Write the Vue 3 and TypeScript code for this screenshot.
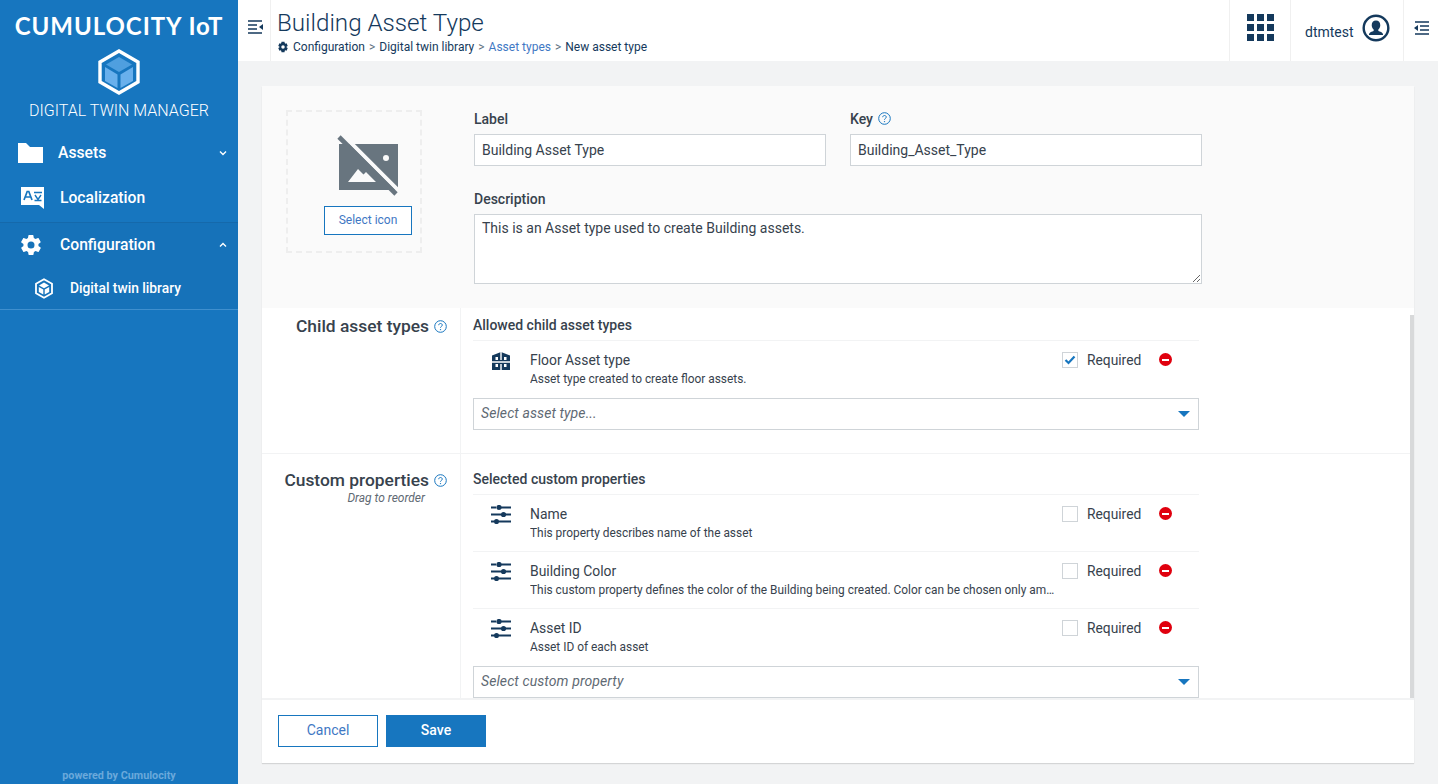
<template>
  <div class="app">
    <aside class="sidebar">
      <div class="brand">CUMULOCITY IoT</div>
      <svg class="brand-logo" width="44" height="46" viewBox="0 0 44 46">
        <path d="M22 2 L41 13 V33 L22 44 L3 33 V13 Z" fill="#1776bf" stroke="#fff" stroke-width="3.4" />
        <path d="M22 8 L35 15.5 L22 23 L9 15.5 Z" fill="#4f9fdf" />
        <path d="M8 18 L20.5 25.5 V39 L8 32 Z" fill="#69b0ec" />
        <path d="M36 18 L23.5 25.5 V39 L36 32 Z" fill="#69b0ec" />
      </svg>
      <div class="app-name">DIGITAL TWIN MANAGER</div>

      <nav class="nav">
        <a class="nav-item assets">
          <svg class="nav-icon" width="25" height="20" viewBox="0 0 25 20">
            <path d="M0 0 H8 L12 4 H25 V20 H0 Z" fill="#fff" />
          </svg>
          <span class="nav-label">Assets</span>
          <svg class="chev" width="8" height="6" viewBox="0 0 8 6"><path d="M1 1.5 L4 4.5 L7 1.5" /></svg>
        </a>
        <a class="nav-item local">
          <svg class="nav-icon" width="26" height="24" viewBox="0 0 26 24">
            <path d="M2 1 H25 V23 L20 19 H2 Z" fill="#fff" />
            <path d="M5 14 L8.2 5.5 H9.8 L13 14 M6.4 11 H11.6" fill="none" stroke="#1776bf" stroke-width="1.7" />
            <path d="M15 6.5 H23 M16 9 L19 13.5 L22 9 M15.5 14.5 H22.5" fill="none" stroke="#1776bf" stroke-width="1.4" />
          </svg>
          <span class="nav-label">Localization</span>
        </a>
        <div class="open-group">
          <a class="nav-item config">
            <svg class="nav-icon" width="24" height="24" viewBox="0 0 24 24">
              <path d="M19.4 13c.1-.3.1-.7.1-1s0-.7-.1-1l2.1-1.6c.2-.2.2-.4.1-.6l-2-3.5c-.1-.2-.4-.3-.6-.2l-2.5 1c-.5-.4-1.1-.7-1.7-1l-.4-2.6c0-.2-.2-.4-.5-.4h-4c-.2 0-.4.2-.5.4l-.4 2.6c-.6.3-1.2.6-1.7 1l-2.5-1c-.2-.1-.5 0-.6.2l-2 3.5c-.1.2-.1.5.1.6L4.5 11c0 .3-.1.7-.1 1s0 .7.1 1l-2.1 1.6c-.2.2-.2.4-.1.6l2 3.5c.1.2.4.3.6.2l2.5-1c.5.4 1.1.7 1.7 1l.4 2.6c0 .2.2.4.5.4h4c.2 0 .4-.2.5-.4l.4-2.6c.6-.3 1.2-.6 1.7-1l2.5 1c.2.1.5 0 .6-.2l2-3.5c.1-.2.1-.5-.1-.6L19.4 13zM12 15.5a3.5 3.5 0 1 1 0-7 3.5 3.5 0 0 1 0 7z" fill="#fff" />
            </svg>
            <span class="nav-label">Configuration</span>
            <svg class="chev" width="8" height="6" viewBox="0 0 8 6"><path d="M1 4.5 L4 1.5 L7 4.5" /></svg>
          </a>
          <a class="sub-item">
            <svg width="20" height="21" viewBox="0 0 20 21">
              <path d="M10 1.2 L18 5.8 V15.2 L10 19.8 L2 15.2 V5.8 Z" fill="none" stroke="#fff" stroke-width="1.8" />
              <path d="M10 4.6 L15 7.5 L10 10.2 L5 7.5 Z" fill="#fff" />
              <path d="M4.8 9 L9.3 11.5 V16.4 L4.8 13.9 Z M15.2 9 L10.7 11.5 V16.4 L15.2 13.9 Z" fill="#fff" />
            </svg>
            <span>Digital twin library</span>
          </a>
        </div>
      </nav>

      <div class="powered">powered by Cumulocity</div>
    </aside>

    <div class="main">
      <header class="topbar">
        <button class="bar-toggle left">
          <svg width="15" height="14" viewBox="0 0 15 14">
            <path d="M0 1 H14 M0 5 H9 M0 9 H9 M0 13 H14" stroke="#14395c" stroke-width="1.3" fill="none" />
            <path d="M15 4 V10 L11 7 Z" fill="#14395c" />
          </svg>
        </button>
        <div class="title-block">
          <h1>{{ title }}</h1>
          <div class="crumbs">
            <svg width="12" height="12" viewBox="0 0 24 24">
              <path d="M21.5 14l-2.3-1.2a7.5 7.5 0 0 0 0-1.6L21.5 10l-2.3-5.5-2.6.8a7.5 7.5 0 0 0-1.2-1.1L15 1.5H9l-.4 2.7c-.4.3-.8.7-1.2 1.1l-2.6-.8L2.5 10l2.3 1.2a7.5 7.5 0 0 0 0 1.6L2.5 14l2.3 5.5 2.6-.8c.4.4.8.8 1.2 1.1l.4 2.7h6l.4-2.7c.4-.3.8-.7 1.2-1.1l2.6.8zM12 15.5a3.5 3.5 0 1 1 0-7 3.5 3.5 0 0 1 0 7z" fill="#14395c" />
            </svg>
            <span>Configuration</span><i>&gt;</i>
            <span>Digital twin library</span><i>&gt;</i>
            <a>Asset types</a><i>&gt;</i>
            <span>New asset type</span>
          </div>
        </div>
        <div class="apps-cell">
          <div class="apps-grid">
            <span v-for="n in 9" :key="n"></span>
          </div>
        </div>
        <div class="user-cell">
          <span>dtmtest</span>
          <svg width="28" height="28" viewBox="0 0 30 30">
            <circle cx="15" cy="15" r="13.2" fill="#fff" stroke="#14395c" stroke-width="2.6" />
            <path d="M15 7c2.9 0 4.6 2.2 4.6 5 0 2-1 3.7-2.1 4.7v1.5c1.8.8 4.5 1.3 5 3.3v1H7.5v-1c.5-2 3.2-2.5 5-3.3v-1.5C11.4 15.7 10.4 14 10.4 12c0-2.8 1.7-5 4.6-5z" fill="#14395c" />
          </svg>
        </div>
        <button class="bar-toggle right">
          <svg width="15" height="14" viewBox="0 0 15 14">
            <path d="M1 1 H15 M6 5 H15 M6 9 H15 M1 13 H15" stroke="#14395c" stroke-width="1.3" fill="none" />
            <path d="M0 7 L4 4 V10 Z" fill="#14395c" />
          </svg>
        </button>
      </header>

      <main class="content">
        <section class="card">
          <div class="head-section">
            <div class="icon-picker">
              <svg width="62" height="62" viewBox="0 0 62 62">
                <path d="M2 9 H61 V55 H2 Z" fill="#68757f" />
                <path d="M11 47 L21 34 L26.5 39.5 L29 37 L39 47 Z" fill="#fafafa" />
                <circle cx="49" cy="23" r="3" fill="#fafafa" />
                <path d="M5.5 -0.5 L63 57" stroke="#fafafa" stroke-width="4" />
                <path d="M2 2 L59 59" stroke="#68757f" stroke-width="4.6" />
              </svg>
              <button class="btn-select">Select icon</button>
            </div>
            <div class="head-fields">
              <div class="field-row">
                <label class="field">
                  <span class="field-label">Label</span>
                  <input class="text-input" :value="form.label" />
                </label>
                <label class="field">
                  <span class="field-label">Key <HelpMark /></span>
                  <input class="text-input" :value="form.key" />
                </label>
              </div>
              <label class="field desc">
                <span class="field-label">Description</span>
                <textarea class="text-input area" :value="form.description"></textarea>
              </label>
            </div>
          </div>

          <div class="scroll-area">
            <div class="prop-section child">
              <div class="prop-side">
                <h3>Child asset types <HelpMark /></h3>
              </div>
              <div class="prop-body">
                <h4>Allowed child asset types</h4>
                <div v-for="c in childTypes" :key="c.name" class="prop-row">
                  <svg class="row-icon" width="20" height="18" viewBox="0 0 20 18">
                    <path d="M10 0 L19 3.5 V18 H1 V3.5 Z" fill="#14395c" />
                    <path d="M1 10 H19 M10 0 V8 M10 12 V18" stroke="#fff" stroke-width="1.4" />
                    <path d="M4.5 5 H7 V8 H4.5 Z M13 5 H15.5 V8 H13 Z M4.5 12 H7 V15 H4.5 Z M13 12 H15.5 V15 H13 Z" fill="#fff" />
                  </svg>
                  <div class="row-text">
                    <div class="row-name">{{ c.name }}</div>
                    <div class="row-desc">{{ c.desc }}</div>
                  </div>
                  <span class="check" :class="{ on: c.required }">
                    <svg v-if="c.required" width="12" height="10" viewBox="0 0 12 10">
                      <path d="M1.5 5 L4.5 8 L10.5 1.5" fill="none" stroke="#1776bf" stroke-width="2.2" />
                    </svg>
                  </span>
                  <span class="req-label">Required</span>
                  <span class="remove"></span>
                </div>
                <div class="select-box">
                  <span>Select asset type...</span>
                  <b class="caret"></b>
                </div>
              </div>
            </div>

            <div class="prop-section custom">
              <div class="prop-side">
                <h3>Custom properties <HelpMark /></h3>
                <small>Drag to reorder</small>
              </div>
              <div class="prop-body">
                <h4>Selected custom properties</h4>
                <div v-for="p in customProps" :key="p.name" class="prop-row">
                  <svg class="row-icon" width="20" height="19" viewBox="0 0 20 19">
                    <path d="M0 2.5 H5 M10 2.5 H20 M0 9.5 H10 M14 9.5 H20 M0 16.5 H3 M8 16.5 H20" stroke="#14395c" stroke-width="2" />
                    <circle cx="8" cy="2.5" r="2.6" fill="#14395c" />
                    <circle cx="12.5" cy="9.5" r="2.6" fill="#14395c" />
                    <circle cx="5.5" cy="16.5" r="2.6" fill="#14395c" />
                  </svg>
                  <div class="row-text">
                    <div class="row-name">{{ p.name }}</div>
                    <div class="row-desc">{{ p.desc }}</div>
                  </div>
                  <span class="check"></span>
                  <span class="req-label">Required</span>
                  <span class="remove"></span>
                </div>
                <div class="select-box">
                  <span>Select custom property</span>
                  <b class="caret"></b>
                </div>
              </div>
            </div>
            <div class="scroll-thumb"></div>
          </div>

          <footer class="card-footer">
            <button class="btn btn-cancel">Cancel</button>
            <button class="btn btn-save">Save</button>
          </footer>
        </section>
      </main>
    </div>
  </div>
</template>

<script setup lang="ts">
import { h, reactive } from "vue";

const HelpMark = () =>
  h("svg", { class: "help", width: 13, height: 13, viewBox: "0 0 13 13" }, [
    h("circle", { cx: 6.5, cy: 6.5, r: 5.8, fill: "none", stroke: "#1776bf", "stroke-width": 1 }),
    h("path", {
      d: "M4.7 5.2c0-1 .8-1.7 1.8-1.7s1.8.7 1.8 1.6c0 1.3-1.8 1.3-1.8 2.6",
      fill: "none",
      stroke: "#1776bf",
      "stroke-width": 1,
    }),
    h("circle", { cx: 6.5, cy: 9.6, r: 0.7, fill: "#1776bf" }),
  ]);

const title = "Building Asset Type";

const form = reactive({
  label: "Building Asset Type",
  key: "Building_Asset_Type",
  description: "This is an Asset type used to create Building assets.",
});

const childTypes = [
  { name: "Floor Asset type", desc: "Asset type created to create floor assets.", required: true },
];

const customProps = [
  { name: "Name", desc: "This property describes name of the asset" },
  {
    name: "Building Color",
    desc: "This custom property defines the color of the Building being created. Color can be chosen only among a fixed list of values",
  },
  { name: "Asset ID", desc: "Asset ID of each asset" },
];
</script>

<style>
html,
body {
  margin: 0;
  background: #f2f3f4;
}

.help {
  display: inline-block;
  flex: none;
}

.field-label .help {
  margin: -2px 0 0 2px;
}
</style>

<style scoped>
.app {
  display: flex;
  height: 784px;
  overflow: hidden;
  font-family: Roboto, "Liberation Sans", sans-serif;
  font-size: 14px;
  color: #14395c;
  background: #f2f3f4;
}

.sidebar {
  width: 238px;
  flex: none;
  background: #1776bf;
  color: #fff;
  display: flex;
  flex-direction: column;
  align-items: center;
}

.brand {
  margin-top: 10px;
  font-family: Lato, sans-serif;
  font-weight: 700;
  font-size: 24px;
  line-height: 31px;
  letter-spacing: 0.95px;
  white-space: nowrap;
}

.brand-logo {
  margin-top: 8px;
  display: block;
}

.app-name {
  margin-top: 6px;
  font-weight: 300;
  font-size: 16px;
  line-height: 20px;
}

.nav {
  width: 100%;
  margin-top: 9px;
  font-size: 15.7px;
  font-weight: 500;
}

.nav-item {
  position: relative;
  display: flex;
  align-items: center;
  height: 45px;
}

.nav-item.assets {
  padding-left: 18px;
}

.nav-item.assets .nav-label {
  margin-left: 15px;
}

.nav-item.local {
  box-sizing: border-box;
  padding: 0 0 2px 19px;
  height: 47px;
}

.nav-item.local .nav-label {
  margin-left: 15px;
}

.nav-item.config {
  padding-left: 19px;
  height: 43px;
}

.nav-item.config .nav-label {
  margin-left: 17px;
}

.chev {
  margin-left: auto;
  margin-right: 11px;
}

.chev path {
  fill: none;
  stroke: #fff;
  stroke-width: 1.4;
}

.open-group {
  background: #1672b9;
  border-top: 1px solid #1569ab;
  border-bottom: 1px solid #3f8fce;
  height: 88px;
  box-sizing: border-box;
}

.sub-item {
  display: flex;
  align-items: center;
  height: 44px;
  padding-left: 34px;
  gap: 16px;
  font-size: 13.8px;
}

.powered {
  margin-top: auto;
  margin-bottom: 2px;
  font-size: 10.8px;
  line-height: 12px;
  font-weight: 700;
  color: #6aa9db;
}

.main {
  flex: 1;
  min-width: 0;
  display: flex;
  flex-direction: column;
}

.topbar {
  height: 61px;
  flex: none;
  background: #fff;
  display: flex;
  align-items: stretch;
}

.bar-toggle {
  border: 0;
  background: none;
  padding: 0 0 7px;
  display: flex;
  align-items: center;
  justify-content: center;
}

.bar-toggle.left {
  width: 33px;
  border-right: 1px solid #f0f0f0;
  padding-left: 2px;
}

.bar-toggle.right {
  width: 34px;
  padding-bottom: 5px;
}

.title-block {
  flex: 1;
  padding-left: 6px;
}

.title-block h1 {
  margin: 7px 0 0;
  font-weight: 300;
  font-size: 24.2px;
  line-height: 32px;
  color: #14395c;
}

.crumbs {
  display: flex;
  align-items: center;
  gap: 4px;
  font-size: 12px;
  line-height: 16px;
  color: #14395c;
}

.crumbs i {
  font-style: normal;
  color: #5f7282;
}

.crumbs a {
  color: #3f78c4;
}

.apps-cell {
  width: 61px;
  border-left: 1px solid #f0f0f0;
  display: flex;
  align-items: center;
  justify-content: center;
  padding: 0 0 6px 0;
  box-sizing: border-box;
}

.apps-grid {
  display: grid;
  grid-template-columns: repeat(3, 7px);
  grid-auto-rows: 7px;
  gap: 3px;
}

.apps-grid span {
  background: #14395c;
}

.user-cell {
  width: 114px;
  box-sizing: border-box;
  border-left: 1px solid #f0f0f0;
  border-right: 1px solid #f0f0f0;
  display: flex;
  align-items: center;
  gap: 8px;
  padding: 0 0 5px 14px;
  font-size: 14px;
}

.user-cell span {
  margin-top: 8px;
}

.content {
  flex: 1;
  min-height: 0;
  padding: 25px 24px 21px;
}

.card {
  height: 677px;
  width: 1152px;
  display: flex;
  flex-direction: column;
  background: #fff;
  box-shadow: 0 1px 1px rgba(0, 0, 0, 0.12);
}

.head-section {
  height: 222px;
  flex: none;
  box-sizing: border-box;
  background: #fafafa;
  padding: 24px 24px 0;
  display: flex;
  gap: 52px;
}

.icon-picker {
  width: 136px;
  height: 143px;
  box-sizing: border-box;
  border: 2px dashed #eeeeee;
  flex: none;
  display: flex;
  flex-direction: column;
  align-items: center;
  padding: 23px 0 0 28px;
}

.btn-select {
  margin-top: 9px;
  width: 88px;
  height: 29px;
  flex: none;
  border: 1px solid #1776bf;
  background: #fff;
  color: #3f78c4;
  font: 400 12px Roboto, sans-serif;
  padding: 0 0 2px;
}

.head-fields {
  width: 728px;
}

.field-row {
  display: flex;
  gap: 24px;
}

.field {
  display: block;
  flex: 1;
}

.field-label {
  display: flex;
  align-items: center;
  gap: 3px;
  height: 18px;
  font-size: 14px;
  font-weight: 500;
  color: #37424d;
}

.text-input {
  display: block;
  width: 100%;
  height: 32px;
  margin-top: 6px;
  box-sizing: border-box;
  border: 1px solid #cfd4d8;
  background: #fff;
  padding: 0 7px;
  font: 400 14px Roboto, sans-serif;
  color: #37424d;
  border-radius: 0;
  outline: 0;
}

.desc {
  margin-top: 24px;
}

.area {
  height: 70px;
  padding: 5px 7px;
  resize: vertical;
}

.scroll-area {
  position: relative;
  flex: none;
  height: 392px;
}

.scroll-thumb {
  position: absolute;
  right: 0;
  top: 7px;
  bottom: 2px;
  width: 4px;
  background: #d8d9da;
}

.prop-section {
  display: flex;
  box-sizing: border-box;
  border-bottom: 1px solid #f2f3f4;
}

.prop-section.child {
  height: 146px;
}

.prop-section.custom {
  height: 246px;
  border-bottom-width: 2px;
}

.prop-side {
  width: 199px;
  flex: none;
  box-sizing: border-box;
  border-right: 1px solid #f2f3f4;
  text-align: right;
  padding: 7px 13px 0 0;
}

.custom .prop-side {
  padding-top: 15px;
}

.prop-side h3 {
  margin: 0;
  display: flex;
  justify-content: flex-end;
  align-items: center;
  gap: 5px;
  font-size: 17.4px;
  line-height: 22px;
  font-weight: 500;
  color: #37424d;
}

.prop-side small {
  display: block;
  padding-right: 22px;
  font-size: 12px;
  font-style: italic;
  line-height: 14px;
  margin-top: 0;
  color: #5f6a74;
}

.prop-body {
  width: 738px;
  box-sizing: border-box;
  padding: 0 0 0 12px;
}

.prop-body h4 {
  margin: 0;
  height: 33px;
  box-sizing: border-box;
  padding-top: 9px;
  font-size: 14px;
  line-height: 16px;
  font-weight: 500;
  color: #37424d;
  border-bottom: 1px solid #f2f3f4;
}

.custom .prop-body h4 {
  padding-top: 17px;
  height: 41px;
}

.prop-row {
  display: flex;
  align-items: flex-start;
  height: 57px;
  box-sizing: border-box;
  padding-top: 10px;
  border-bottom: 1px solid #f2f3f4;
  width: 726px;
}

.prop-row:nth-last-child(2) {
  border-bottom: 0;
}

.row-icon {
  margin: 0 0 0 18px;
  flex: none;
}

.child .row-icon {
  margin-top: 1px;
}

.row-text {
  width: 532px;
  margin-left: 19px;
  flex: none;
  min-width: 0;
}

.row-name {
  font-size: 13.9px;
  line-height: 18px;
  color: #37424d;
}

.row-desc {
  max-width: 526px;
  margin-top: 3px;
  font-size: 11.9px;
  line-height: 14px;
  color: #37424d;
  overflow: hidden;
  text-overflow: ellipsis;
  white-space: nowrap;
}

.check {
  width: 16px;
  height: 16px;
  box-sizing: border-box;
  border: 1px solid #cfd4d8;
  background: #fff;
  margin-top: 1px;
  flex: none;
  display: flex;
  align-items: center;
  justify-content: center;
}

.req-label {
  margin: 1px 0 0 9px;
  font-size: 13.8px;
  line-height: 16px;
  color: #37424d;
}

.remove {
  position: relative;
  width: 13px;
  height: 13px;
  margin: 2px 0 0 18px;
  border-radius: 50%;
  background: #e0000e;
}

.remove::after {
  content: "";
  position: absolute;
  left: 3px;
  right: 3px;
  top: 5.5px;
  height: 2px;
  background: #fff;
}

.select-box {
  width: 726px;
  height: 32px;
  box-sizing: border-box;
  border: 1px solid #cfd4d8;
  display: flex;
  align-items: center;
  justify-content: space-between;
  padding: 0 8px 2px 7px;
  font-size: 14px;
  letter-spacing: 0.1px;
  font-style: italic;
  color: #5f6a74;
}

.caret {
  width: 0;
  height: 0;
  margin-top: 2px;
  border-left: 6px solid transparent;
  border-right: 6px solid transparent;
  border-top: 6px solid #1776bf;
}

.card-footer {
  height: 63px;
  flex: none;
  box-sizing: border-box;
  padding: 15px 16px;
  display: flex;
  gap: 8px;
}

.btn {
  width: 100px;
  height: 32px;
  font: 400 14px Roboto, sans-serif;
  padding: 0 0 2px;
}

.btn-cancel {
  background: #fff;
  color: #3f78c4;
  border: 1px solid #1776bf;
}

.btn-save {
  background: #1776bf;
  color: #fff;
  border: 1px solid #1776bf;
  font-weight: 500;
}
</style>
